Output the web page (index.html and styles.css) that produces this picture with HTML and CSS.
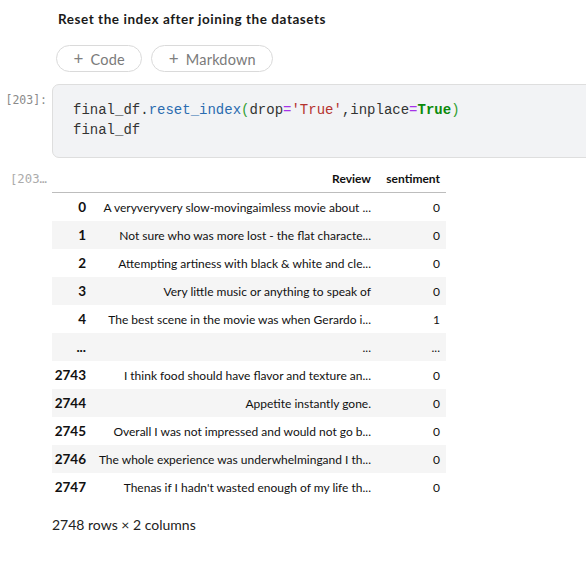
FILE: index.html
```html
<!DOCTYPE html>
<html>
<head>
<meta charset="utf-8">
<link rel="stylesheet" href="styles.css">
</head>
<body>
<div class="page">
  <div class="md-cell">Reset the index after joining the datasets</div>
  <div class="add-buttons">
    <button class="add-btn"><span class="plus">+</span> Code</button>
    <button class="add-btn"><span class="plus">+</span> Markdown</button>
  </div>
  <div class="code-cell">
    <div class="prompt in-prompt">[203]:</div>
    <div class="code-box">
      <pre class="code"><span class="n">final_df</span><span class="o">.</span><span class="fn">reset_index</span><span class="p">(</span><span class="n">drop</span><span class="eq">=</span><span class="s">'True'</span><span class="n">,inplace</span><span class="eq">=</span><span class="k">True</span><span class="p">)</span>
<span class="n">final_df</span></pre>
    </div>
  </div>
  <div class="out-cell">
    <div class="prompt out-prompt">[203…</div>
    <div class="out-area">
      <table class="df">
        <thead>
          <tr><th class="idx"></th><th class="rev">Review</th><th class="sen">sentiment</th></tr>
        </thead>
        <tbody>
          <tr><th class="idx">0</th><td>A veryveryvery slow-movingaimless movie about ...</td><td>0</td></tr>
          <tr><th class="idx">1</th><td>Not sure who was more lost - the flat characte...</td><td>0</td></tr>
          <tr><th class="idx">2</th><td>Attempting artiness with black &amp; white and cle...</td><td>0</td></tr>
          <tr><th class="idx">3</th><td>Very little music or anything to speak of</td><td>0</td></tr>
          <tr><th class="idx">4</th><td>The best scene in the movie was when Gerardo i...</td><td>1</td></tr>
          <tr><th class="idx">...</th><td>...</td><td>...</td></tr>
          <tr><th class="idx">2743</th><td>I think food should have flavor and texture an...</td><td>0</td></tr>
          <tr><th class="idx">2744</th><td>Appetite instantly gone.</td><td>0</td></tr>
          <tr><th class="idx">2745</th><td>Overall I was not impressed and would not go b...</td><td>0</td></tr>
          <tr><th class="idx">2746</th><td>The whole experience was underwhelmingand I th...</td><td>0</td></tr>
          <tr><th class="idx">2747</th><td>Thenas if I hadn't wasted enough of my life th...</td><td>0</td></tr>
        </tbody>
      </table>
      <p class="shape">2748 rows × 2 columns</p>
    </div>
  </div>
</div>
</body>
</html>
```

FILE: styles.css
```css
html, body {
  margin: 0;
  padding: 0;
  background: #ffffff;
  overflow: hidden;
}
.page {
  width: 586px;
  height: 561px;
  overflow: hidden;
  font-family: Lato, "Open Sans", sans-serif;
  color: #000;
}
.md-cell {
  padding: 10px 0 0 58px;
  height: 18px;
  line-height: 18px;
  font-size: 13.5px;
  font-weight: 700;
  letter-spacing: 0.55px;
  color: #1a1a1a;
}
.add-buttons {
  display: flex;
  gap: 9px;
  margin: 17px 0 0 56px;
}
.add-btn {
  box-sizing: border-box;
  height: 27px;
  padding: 0 16.5px;
  border: 1px solid #dadada;
  border-radius: 14px;
  background: #fff;
  color: #7a7a7a;
  font-family: Lato, "Open Sans", sans-serif;
  font-size: 14.5px;
  line-height: 25px;
  letter-spacing: 0.2px;
}
.add-btn .plus {
  font-size: 17px;
  margin-right: 3px;
  color: #808080;
}
.code-cell {
  display: flex;
  margin-top: 12px;
}
.prompt {
  flex: none;
  width: 47px;
  box-sizing: border-box;
  text-align: right;
  font-family: "DejaVu Sans Mono", monospace;
  font-size: 11.5px;
  color: #8a8a8a;
}
.in-prompt {
  padding-top: 9px;
  margin-right: 5px;
}
.code-box {
  flex: none;
  width: 560px;
  box-sizing: border-box;
  height: 74px;
  background: #f2f3f5;
  border: 1px solid #dedede;
  border-radius: 7px;
  padding: 15px 0 0 20px;
}
.code {
  margin: 0;
  font-family: "Liberation Mono", monospace;
  font-size: 14px;
  line-height: 20px;
  color: #333;
}
.code .fn { color: #2b6cb0; }
.code .p { color: #32a032; }
.code .eq { color: #a633e8; }
.code .s { color: #b5322f; }
.code .k { color: #0a8a0a; font-weight: 700; }
.out-cell {
  display: flex;
  margin-top: 8px;
}
.out-prompt {
  padding-top: 6px;
  margin-right: 5px;
  color: #ababab;
  font-size: 12.3px;
}
.out-area {
  flex: none;
}
.df {
  border-collapse: collapse;
  font-size: 12px;
  font-family: Lato, "Open Sans", sans-serif;
  color: #111;
}
.df thead th {
  height: 20px;
  padding: 0 6px 6px 6px;
  text-align: right;
  font-weight: 700;
  border-bottom: 1px solid #bdbdbd;
  vertical-align: bottom;
}
.df th.idx { width: 28px; }
.df th.rev { width: 273px; }
.df th.sen { width: 57px; }
.df tbody th, .df tbody td {
  height: 28px;
  padding: 0 6px;
  text-align: right;
  white-space: nowrap;
}
.df tbody th {
  font-weight: 700;
  font-size: 13.5px;
  padding-left: 0;
}
.df tbody tr:nth-child(even) { background: #f5f5f5; }
.shape {
  margin: 15px 0 0 0;
  font-size: 14px;
  color: #222;
}
```
